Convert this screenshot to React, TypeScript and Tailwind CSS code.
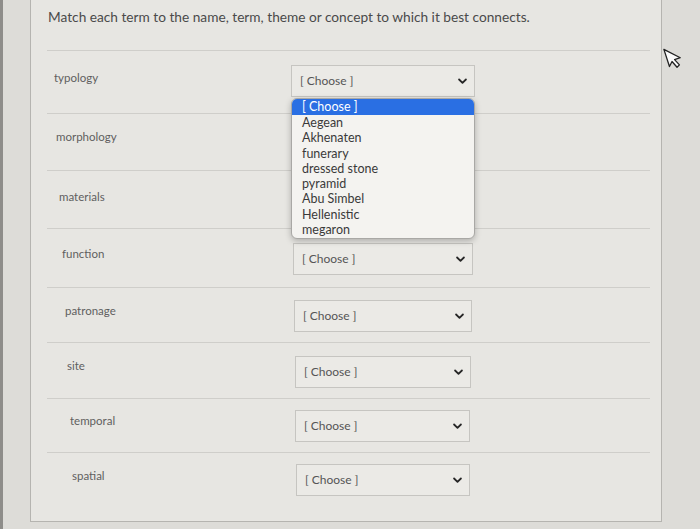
import React from "react";

const rows = [
  { label: "typology", h: "h-[63px]", lp: "pl-[7px]", lt: "pt-[20px]", dm: "mt-[14px]", dl: "ml-[0px]", w: "w-[184px]", hidden: false },
  { label: "morphology", h: "h-[57px]", lp: "pl-[9px]", lt: "pt-[16px]", dm: "mt-[13px]", dl: "ml-[1px]", w: "w-[183px]", hidden: true },
  { label: "materials", h: "h-[58px]", lp: "pl-[12px]", lt: "pt-[19px]", dm: "mt-[13px]", dl: "ml-[1px]", w: "w-[182px]", hidden: true },
  { label: "function", h: "h-[59px]", lp: "pl-[15px]", lt: "pt-[18px]", dm: "mt-[14px]", dl: "ml-[2px]", w: "w-[180px]", hidden: false },
  { label: "patronage", h: "h-[55px]", lp: "pl-[18px]", lt: "pt-[16px]", dm: "mt-[12px]", dl: "ml-[3px]", w: "w-[178px]", hidden: false },
  { label: "site", h: "h-[56px]", lp: "pl-[20px]", lt: "pt-[16px]", dm: "mt-[13px]", dl: "ml-[4px]", w: "w-[176px]", hidden: false },
  { label: "temporal", h: "h-[54px]", lp: "pl-[23px]", lt: "pt-[15px]", dm: "mt-[11px]", dl: "ml-[4px]", w: "w-[175px]", hidden: false },
  { label: "spatial", h: "h-[70px]", lp: "pl-[25px]", lt: "pt-[16px]", dm: "mt-[11px]", dl: "ml-[5px]", w: "w-[174px]", hidden: false },
];

const options = [
  "Aegean",
  "Akhenaten",
  "funerary",
  "dressed stone",
  "pyramid",
  "Abu Simbel",
  "Hellenistic",
  "megaron",
];

function Chevron() {
  return (
    <svg width="9" height="7" viewBox="0 0 9 7" className="shrink-0">
      <path d="M1.1 1.5 L4.5 4.9 L7.9 1.5" fill="none" stroke="#262626" strokeWidth="1.8" strokeLinecap="round" strokeLinejoin="round" />
    </svg>
  );
}

function Select({ open, w, hidden }: { open?: boolean; w: string; hidden?: boolean }) {
  return (
    <div className={`relative ${w}`}>
      <div className="h-[32px] border border-[#c6c5c1] bg-[#ebeae6] flex items-center justify-between pl-[8px] pr-[7px] text-[12px] text-[#555]">
        {!hidden && <span>[ Choose ]</span>}
        {!hidden && <Chevron />}
      </div>
      {open && (
        <div className="absolute left-0 top-[33px] w-[184px] z-10 bg-[#f4f3f0] border border-[#a9a8a5] rounded-[6px] shadow-[0_2px_6px_rgba(0,0,0,0.25)] text-[12.5px] leading-[15.3px] text-[#3a3a3a] pb-[1px]">
          <div className="bg-[#2a6fe3] text-white rounded-t-[5px] pl-[10px] h-[16px] leading-[16px]">[ Choose ]</div>
          {options.map((o) => (
            <div key={o} className="pl-[10px]">{o}</div>
          ))}
        </div>
      )}
    </div>
  );
}

export default function App() {
  return (
    <div className="w-[700px] h-[529px] bg-[#dddcd8] flex overflow-hidden relative font-['Lato',_'Open_Sans',_sans-serif]">
      <div className="w-[3px] h-full bg-[#8e8d8a]" />
      <div className="pl-[27px]">
        <div className="w-[632px] h-[523px] -mt-px border border-[#b5b4b0] bg-[#e7e6e2]">
          <div className="h-[50px] pl-[17px] pt-[8px] text-[13.7px] leading-[18px] text-[#4a4a4a]">
            Match each term to the name, term, theme or concept to which it best connects.
          </div>
          <div className="ml-[16px] mr-[11px]">
            {rows.map((r, i) => (
              <div key={r.label} className={`${r.h} border-t border-[#cfceca] flex items-start`}>
                <div className={`w-[244px] ${r.lp} ${r.lt} text-[11.5px] leading-[14px] text-[#5f5f5f]`}>{r.label}</div>
                <div className={`${r.dm} ${r.dl}`}>
                  <Select open={i === 0} w={r.w} hidden={r.hidden} />
                </div>
              </div>
            ))}
          </div>
        </div>
      </div>
      <svg className="absolute left-[660px] top-[44px]" width="26" height="28" viewBox="0 0 26 28">
        <g transform="rotate(-18 13 14)">
          <path d="M7 3 L7 21 L11 17 L14 24 L17 22.5 L14 16 L20 16 Z" fill="#fafafa" stroke="#222" strokeWidth="1.3" strokeLinejoin="round" />
        </g>
      </svg>
    </div>
  );
}
